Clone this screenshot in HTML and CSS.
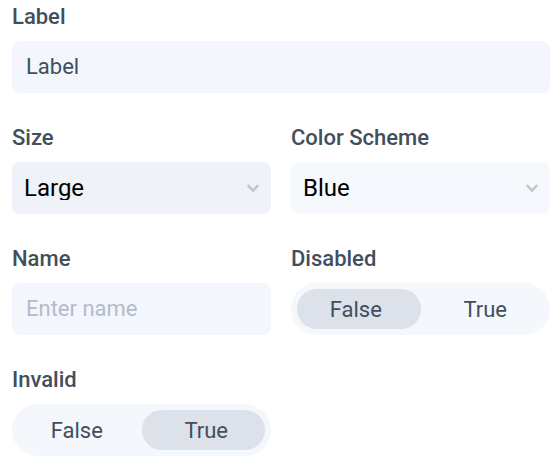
FILE: index.html
```html
<!DOCTYPE html>
<html lang="en">
<head>
<meta charset="utf-8">
<meta name="viewport" content="width=device-width, initial-scale=1">
<title>Component properties</title>
<link rel="stylesheet" href="styles.css">
</head>
<body>
<form class="props">
  <div class="field field-wide">
    <label class="field-label" for="label">Label</label>
    <input class="control text-input" id="label" type="text" value="Label">
  </div>
  <div class="field">
    <label class="field-label" for="size">Size</label>
    <div class="select-wrap">
      <select class="control select select-active" id="size">
        <option>Small</option>
        <option>Medium</option>
        <option selected>Large</option>
      </select>
      <svg class="chevron" viewBox="0 0 14 10" aria-hidden="true"><path d="M1.8 2.2L7 7.6l5.2-5.4"/></svg>
    </div>
  </div>
  <div class="field">
    <label class="field-label" for="scheme">Color Scheme</label>
    <div class="select-wrap">
      <select class="control select" id="scheme">
        <option selected>Blue</option>
        <option>Green</option>
        <option>Red</option>
      </select>
      <svg class="chevron" viewBox="0 0 14 10" aria-hidden="true"><path d="M1.8 2.2L7 7.6l5.2-5.4"/></svg>
    </div>
  </div>
  <div class="field">
    <label class="field-label" for="name">Name</label>
    <input class="control text-input" id="name" type="text" placeholder="Enter name">
  </div>
  <div class="field" role="radiogroup" aria-labelledby="disabled-label">
    <span class="field-label" id="disabled-label">Disabled</span>
    <div class="control toggle">
      <label class="choice"><input class="choice-input" type="radio" name="disabled" checked><span class="choice-text">False</span></label>
      <label class="choice"><input class="choice-input" type="radio" name="disabled"><span class="choice-text">True</span></label>
    </div>
  </div>
  <div class="field" role="radiogroup" aria-labelledby="invalid-label">
    <span class="field-label" id="invalid-label">Invalid</span>
    <div class="control toggle">
      <label class="choice"><input class="choice-input" type="radio" name="invalid"><span class="choice-text">False</span></label>
      <label class="choice"><input class="choice-input" type="radio" name="invalid" checked><span class="choice-text">True</span></label>
    </div>
  </div>
</form>
</body>
</html>
```
FILE: styles.css
```css
* {
  box-sizing: border-box;
}

body {
  margin: 0;
  background: #fff;
  color: #414f5d;
  font-family: Roboto, sans-serif;
  font-size: 22px;
}

.props {
  display: grid;
  grid-template-columns: 1fr 1fr;
  gap: 32px 20px;
  padding: 4px 10px 12px 12px;
}

.field {
  display: flex;
  flex-direction: column;
  gap: 11px;
  min-width: 0;
}

.field-wide {
  grid-column: 1 / -1;
}

.field-label {
  font-weight: 500;
  line-height: 26px;
}

.control {
  width: 100%;
  height: 52px;
  border: 0;
  border-radius: 8px;
  background: #f3f6fc;
  color: inherit;
  font: inherit;
}

.text-input {
  padding: 0 14px 2px;
}

.text-input::placeholder {
  color: #b3bccb;
  opacity: 1;
}

.select-wrap {
  display: grid;
  align-items: center;
}

.select-wrap > * {
  grid-area: 1 / 1;
}

.select {
  appearance: none;
  padding: 0 40px 0 12px;
  background: #f5f8fd;
  color: #000;
  font-size: 24px;
  line-height: 24px;
}

.select-active {
  background: #eff2f8;
}

.chevron {
  justify-self: end;
  width: 14px;
  height: 10px;
  margin-right: 11px;
  fill: none;
  stroke: #c6c6c6;
  stroke-width: 2.6;
  pointer-events: none;
}

.toggle {
  display: flex;
  padding: 6px 0;
  border-radius: 26px;
  background: #f4f7fc;
}

.choice {
  display: grid;
  flex: 1;
  cursor: pointer;
}

.choice > * {
  grid-area: 1 / 1;
}

.choice-input {
  appearance: none;
  margin: 0;
  border-radius: 20px;
}

.choice:first-child .choice-input {
  margin-left: 6px;
}

.choice:last-child .choice-input {
  margin-right: 6px;
}

.choice-input:checked {
  background: #dde1ea;
}

.choice-text {
  z-index: 1;
  padding-top: 2px;
  line-height: 38px;
  text-align: center;
}
```
